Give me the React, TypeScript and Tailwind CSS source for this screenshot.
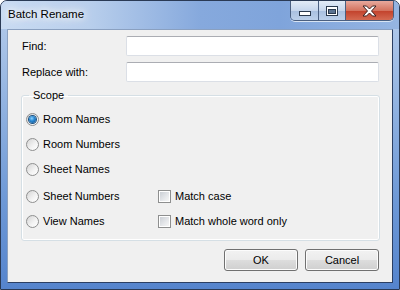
import React from 'react';

const font = "font-['Liberation_Sans',Arial,sans-serif]";

const Radio: React.FC<{ checked?: boolean }> = ({ checked }) => (
    <span className="relative flex h-[13px] w-[13px] shrink-0 items-center justify-center rounded-full border border-[#8e8f8f] bg-[linear-gradient(135deg,#d4d4d4_0%,#f4f4f4_60%,#ffffff_100%)]">
        {checked && (
            <span className="h-[7px] w-[7px] rounded-full bg-[radial-gradient(circle_at_40%_35%,#8fd3ff_0%,#2a8ad4_40%,#0d4a87_100%)] shadow-[0_0_0_1px_#1c5180]" />
        )}
    </span>
);

const Checkbox: React.FC = () => (
    <span className="flex h-[13px] w-[13px] shrink-0 items-center justify-center border border-[#8e8f8f] bg-white">
        <span className="h-[9px] w-[9px] bg-[linear-gradient(135deg,#cbcfd5_0%,#e6e8eb_60%,#f6f6f6_100%)]" />
    </span>
);

const RadioRow: React.FC<{ label: string; checked?: boolean; className?: string }> = ({ label, checked, className }) => (
    <div className={`flex h-[13px] items-center gap-[4px] ${className ?? ''}`}>
        <Radio checked={checked} />
        <span className="text-[11px] leading-none text-black">{label}</span>
    </div>
);

const TextBox: React.FC = () => (
    <div className="h-[20px] w-[254px] rounded-[2px] border border-[#dbdfe6] border-t-[#abadb3] bg-white" />
);

const WinButton: React.FC<{ label: string }> = ({ label }) => (
    <button className="flex h-[22px] w-[74px] items-center justify-center rounded-[3px] border border-[#707070] bg-[linear-gradient(180deg,#f2f2f2_0%,#ebebeb_50%,#dddddd_51%,#cfcfcf_100%)] text-[11px] text-black shadow-[inset_0_0_0_1px_#fcfcfc]">
        {label}
    </button>
);

export default function App() {
    return (
        <div className={`${font} flex h-[290px] w-[400px] flex-col overflow-hidden rounded-t-[7px] border border-[#2a3a55] bg-[linear-gradient(180deg,#b7cdec_0%,#9dbbe4_25%,#6d98d6_70%,#5584cd_100%)]`}>
            {/* title bar */}
            <div className="flex h-[28px] shrink-0 items-start justify-between bg-[linear-gradient(90deg,#c9dbf2_0%,#b9cfec_22%,#86a9dd_50%,#7fa4db_70%,#95b5e2_100%)] pr-[5px]">
                <span className="pl-[7px] pt-[8px] text-[11.5px] leading-none text-black [text-shadow:0_0_6px_#ffffff,0_0_10px_#ffffff,0_0_14px_#ffffff]">
                    Batch Rename
                </span>
                <div className="flex h-[20px] overflow-hidden rounded-b-[5px] border border-t-0 border-[#4a5f80] shadow-[0_1px_0_#d8e4f3]">
                    <div className="flex w-[28px] items-end justify-center border-r border-[#4a5f80] bg-[linear-gradient(180deg,#e2ebf6_0%,#c6d6ec_50%,#a8bfdf_51%,#bcd0ea_100%)] pb-[4px]">
                        <svg width="12" height="5" viewBox="0 0 12 5">
                            <rect x="0.5" y="0.5" width="11" height="4" fill="#fff" stroke="#2b3a4e" />
                        </svg>
                    </div>
                    <div className="flex w-[27px] items-center justify-center border-r border-[#4a5f80] bg-[linear-gradient(180deg,#e2ebf6_0%,#c6d6ec_50%,#a8bfdf_51%,#bcd0ea_100%)]">
                        <svg width="12" height="10" viewBox="0 0 12 10">
                            <rect x="0.5" y="0.5" width="11" height="9" fill="#fff" stroke="#2b3a4e" />
                            <rect x="2.5" y="3.5" width="7" height="4" fill="#5b7391" stroke="#2b3a4e" />
                        </svg>
                    </div>
                    <div className="flex w-[47px] items-center justify-center bg-[linear-gradient(180deg,#e8a99d_0%,#d4735f_50%,#c2412b_51%,#d46a52_100%)]">
                        <svg width="15" height="12" viewBox="0 0 15 12">
                            <path d="M1 1 L4.5 1 L7.5 4 L10.5 1 L14 1 L9.5 6 L14 11 L10.5 11 L7.5 8 L4.5 11 L1 11 L5.5 6 Z" fill="#fff" stroke="#3b2020" strokeWidth="1" strokeLinejoin="round" />
                        </svg>
                    </div>
                </div>
            </div>

            {/* frame + client */}
            <div className="flex flex-1 px-[6px] pb-[6px]">
                <div className="flex h-[254px] w-[386px] flex-col border border-[#8aa0c0] border-r-[#2b3f63] border-b-[#2b3f63] bg-[#f0f0f0] px-[13px] pt-[6px] text-[11px] text-black">
                    <div className="flex h-[20px] items-center">
                        <span className="w-[105px] pl-[1px]">Find:</span>
                        <TextBox />
                    </div>
                    <div className="mt-[6px] flex h-[20px] items-center">
                        <span className="w-[105px] pl-[1px]">Replace with:</span>
                        <TextBox />
                    </div>

                    <fieldset className="relative mt-[8px] h-[151px] w-[359px] rounded-[3px] border border-[#d5dfe5] px-[4px] shadow-[inset_0_0_0_1px_#ffffff]">
                        <legend className="ml-[3px] px-[4px] text-[11px] leading-none">Scope</legend>
                        <div className="flex flex-col pt-[12px]">
                            <RadioRow label="Room Names" checked />
                            <RadioRow label="Room Numbers" className="mt-[12px]" />
                            <RadioRow label="Sheet Names" className="mt-[12px]" />
                            <div className="mt-[14px] grid grid-cols-[132px_1fr]">
                                <RadioRow label="Sheet Numbers" />
                                <div className="flex h-[13px] items-center gap-[4px]">
                                    <Checkbox />
                                    <span className="leading-none">Match case</span>
                                </div>
                            </div>
                            <div className="mt-[12px] grid grid-cols-[132px_1fr]">
                                <RadioRow label="View Names" />
                                <div className="flex h-[13px] items-center gap-[4px]">
                                    <Checkbox />
                                    <span className="leading-none">Match whole word only</span>
                                </div>
                            </div>
                        </div>
                    </fieldset>

                    <div className="mt-[8px] flex justify-end gap-[7px]">
                        <WinButton label="OK" />
                        <WinButton label="Cancel" />
                    </div>
                </div>
            </div>
        </div>
    );
}
